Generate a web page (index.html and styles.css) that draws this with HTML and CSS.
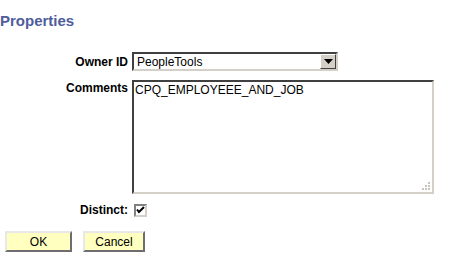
FILE: index.html
```html
<!DOCTYPE html>
<html lang="en">
<head>
    <meta charset="UTF-8">
    <title>Properties</title>
    <link rel="stylesheet" href="styles.css">
</head>
<body>
    <div class="page">
        <h1 class="title">Properties</h1>
        <div class="form">
            <label class="lbl">Owner ID</label>
            <div class="select">
                <span class="value">PeopleTools</span>
                <span class="drop">
                    <svg width="9" height="5" viewBox="0 0 9 5"><path d="M0 0h9L4.5 5z" fill="#000"/></svg>
                </span>
            </div>

            <label class="lbl lbl-top">Comments</label>
            <div class="textarea">
                <span>CPQ_EMPLOYEEE_AND_JOB</span>
                <svg class="grip" width="9" height="9" viewBox="0 0 9 9">
                    <rect x="6" y="0" width="2" height="2" fill="#c8c4bc"/>
                    <rect x="3" y="3" width="2" height="2" fill="#c8c4bc"/>
                    <rect x="6" y="3" width="2" height="2" fill="#c8c4bc"/>
                    <rect x="0" y="6" width="2" height="2" fill="#c8c4bc"/>
                    <rect x="3" y="6" width="2" height="2" fill="#c8c4bc"/>
                    <rect x="6" y="6" width="2" height="2" fill="#c8c4bc"/>
                </svg>
            </div>

            <label class="lbl">Distinct:</label>
            <div class="check">
                <svg width="9" height="8" viewBox="0 0 9 8"><path d="M1 3.5l2 2.5 5-5" stroke="#000" stroke-width="2" fill="none"/></svg>
            </div>
        </div>
        <div class="buttons">
            <button class="btn btn-ok">OK</button>
            <button class="btn btn-cancel">Cancel</button>
        </div>
    </div>
</body>
</html>
```

FILE: styles.css
```css
*{
    margin: 0;
    padding: 0;
    box-sizing: border-box;
}
body{
    background: #fff;
    font-family: "Liberation Sans", Arial, sans-serif;
    font-size: 12px;
    color: #000;
}
.page{
    padding-top: 12px;
}
.title{
    font-size: 15px;
    font-weight: bold;
    color: #4f5d9c;
    line-height: 17px;
    margin-left: 0;
}
.form{
    display: grid;
    grid-template-columns: 128px auto;
    column-gap: 4px;
    row-gap: 9px;
    margin-top: 23px;
    align-items: center;
}
.lbl{
    font-weight: bold;
    text-align: right;
}
.lbl-top{
    align-self: start;
    padding-top: 1px;
}
.select{
    width: 206px;
    height: 19px;
    display: flex;
    align-items: center;
    justify-content: space-between;
    border: 2px solid;
    border-color: #404040 #d4d0c8 #d4d0c8 #404040;
    background: #fff;
}
.value{
    padding-left: 3px;
}
.drop{
    width: 16px;
    height: 15px;
    display: flex;
    align-items: center;
    justify-content: center;
    background: #d4d0c8;
    border: 1px solid;
    border-color: #fff #404040 #404040 #fff;
}
.textarea{
    position: relative;
    width: 302px;
    height: 114px;
    border: 2px solid;
    border-color: #404040 #d4d0c8 #d4d0c8 #404040;
    padding: 1px 1px;
}
.grip{
    position: absolute;
    right: 1px;
    bottom: 1px;
}
.check{
    width: 13px;
    height: 13px;
    border: 2px solid;
    border-color: #808080 #d4d0c8 #d4d0c8 #808080;
    display: flex;
    align-items: center;
    justify-content: center;
    margin-left: 2px;
}
.buttons{
    display: flex;
    gap: 11px;
    margin-top: 14px;
    margin-left: 5px;
}
.btn{
    height: 21px;
    background: #ffffbf;
    font-family: "Liberation Sans", Arial, sans-serif;
    font-size: 12px;
    color: #000;
    border: 2px solid;
    border-color: #e8e8e8 #6e6e6e #6e6e6e #e8e8e8;
}
.btn-ok{
    width: 67px;
}
.btn-cancel{
    width: 62px;
}
```
